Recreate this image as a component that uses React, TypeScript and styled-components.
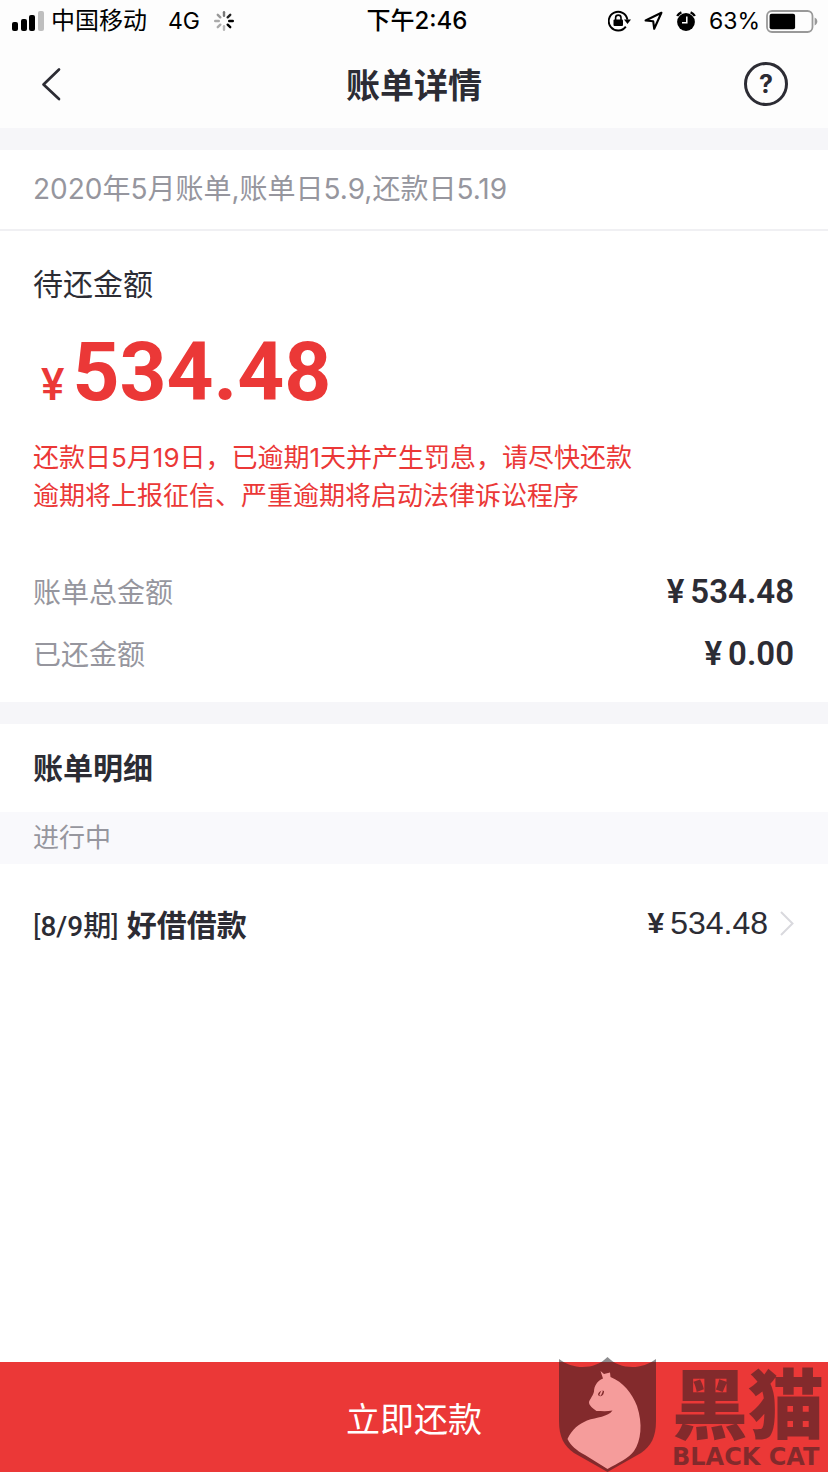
import React from "react";
import styled, { createGlobalStyle } from "styled-components";

const ink = "#2c2c34";
const muted = "#96969e";
const red = "#eb3837";

const GlobalStyle = createGlobalStyle`
  * { box-sizing: border-box; }
  body {
    margin: 0;
    background: #fff;
    color: ${ink};
    font-family: Inter, "Noto Sans CJK SC", sans-serif;
  }
  h1, h2, p, dl, dd, ul { margin: 0; padding: 0; font-weight: 400; }
  button, a { font: inherit; color: inherit; text-decoration: none; }
`;

const Page = styled.div`
  display: flex;
  flex-direction: column;
  min-height: 100vh;
`;

const StatusBar = styled.div`
  display: grid;
  grid-template-columns: 1fr auto 1fr;
  align-items: center;
  height: 40px;
  padding: 0 10px 0 12px;
  background: #fdfdfd;
  color: #000;
  font-size: 24px;
  line-height: 42px;
  white-space: nowrap;
`;

const StatusGroup = styled.div<{ $end?: boolean; $gap: number }>`
  display: flex;
  align-items: center;
  justify-content: ${(p) => (p.$end ? "flex-end" : "flex-start")};
  gap: ${(p) => p.$gap}px;
`;

const Network = styled.span`
  margin: 0 7px 0 14px;
  font-size: 23px;
`;

const Clock = styled.time`
  padding-left: 4px;
  font-size: 24px;
  font-weight: 500;
`;

const Percent = styled.span`
  font-size: 23px;
`;

const NavBar = styled.header`
  display: grid;
  grid-template-columns: 1fr auto 1fr;
  align-items: center;
  height: 88px;
  padding: 0 40px;
  background: #fdfdfd;
`;

const Title = styled.h1`
  padding-top: 4px;
  font-size: 34px;
  line-height: 48px;
  font-weight: 600;
`;

const IconButton = styled.button<{ $end?: boolean }>`
  display: flex;
  padding: 0;
  border: 0;
  background: none;
  justify-self: ${(p) => (p.$end ? "end" : "start")};
  cursor: pointer;
`;

const Band = styled.div`
  height: 22px;
  background: #f6f6f9;
`;

const Period = styled.p`
  padding: 18px 33px;
  border-bottom: 2px solid #f0f0f3;
  color: ${muted};
  font-size: 28px;
  line-height: 43px;
`;

const Summary = styled.section`
  padding: 30px 34px 18px 33px;
`;

const SummaryLabel = styled.h2`
  font-size: 30px;
  line-height: 46px;
`;

const Due = styled.p`
  display: flex;
  align-items: baseline;
  gap: 8px;
  padding: 15px 0 4px 8px;
  color: ${red};
  font-family: Roboto, sans-serif;
  font-size: 82px;
  line-height: 100px;
  font-weight: 700;
`;

const DueSign = styled.span`
  font-size: 44px;
  font-weight: 500;
`;

const Warning = styled.p`
  color: ${red};
  font-size: 26px;
  line-height: 38px;
`;

const Totals = styled.dl`
  margin-top: 45px;
`;

const TotalRow = styled.div`
  display: flex;
  justify-content: space-between;
  align-items: center;
  height: 62px;

  dt {
    color: ${muted};
    font-size: 28px;
  }
`;

const Money = styled.dd`
  display: flex;
  gap: 6px;
  font-family: Roboto, sans-serif;
  font-size: 33px;
  font-weight: 600;
`;

const DetailTitle = styled.h2`
  padding: 20px 33px;
  font-size: 30px;
  line-height: 48px;
  font-weight: 600;
`;

const GroupLabel = styled.p`
  padding: 0 33px;
  background: #f9f9fc;
  color: ${muted};
  font-size: 26px;
  line-height: 52px;
`;

const BillList = styled.ul`
  flex: 1;
  list-style: none;
`;

const BillLink = styled.a`
  display: flex;
  align-items: center;
  justify-content: space-between;
  height: 118px;
  padding: 0 34px 0 33px;
`;

const BillName = styled.span`
  display: flex;
  align-items: baseline;
  gap: 8px;
  font-family: Roboto, "Noto Sans CJK SC", sans-serif;
  font-size: 30px;
  font-weight: 600;
`;

const Installment = styled.span`
  font-size: 28px;
  font-weight: 500;

  i {
    font-style: normal;
    font-weight: 400;
  }
`;

const BillAmount = styled.span`
  display: flex;
  align-items: center;
  gap: 6px;
  font-family: "Liberation Sans", sans-serif;
  font-size: 32px;

  b {
    font-size: 30px;
    font-weight: 700;
  }

  svg {
    margin-left: 6px;
  }
`;

const Footer = styled.footer`
  position: relative;
  display: flex;
`;

const PayButton = styled.button`
  flex: 1;
  height: 110px;
  border: 0;
  background: ${red};
  color: #fff;
  font-size: 34px;
  cursor: pointer;
`;

const Watermark = styled.div`
  position: absolute;
  right: 0;
  bottom: 0;
  display: flex;
  align-items: flex-end;
  gap: 16px;
  color: #1e1e22;
  opacity: 0.5;
  pointer-events: none;
`;

const Brand = styled.div`
  display: flex;
  flex-direction: column;
  width: 156px;
  font-weight: 900;
  white-space: nowrap;
`;

const BrandName = styled.span`
  font-family: "Noto Sans CJK SC", sans-serif;
  font-size: 76px;
  line-height: 84px;
`;

const BrandLatin = styled.span`
  font-family: "DejaVu Sans", sans-serif;
  font-size: 24px;
  line-height: 30px;
`;

const Signal = () => (
  <svg width="32" height="20" viewBox="0 0 32 20" aria-hidden="true">
    <rect x="0" y="11" width="6" height="9" rx="2" />
    <rect x="9" y="8" width="6" height="12" rx="2" />
    <rect x="17" y="4" width="6" height="16" rx="2" />
    <rect x="26" y="0" width="6" height="20" rx="2" fill="#bfbfbf" />
  </svg>
);

const spokes = ["#777", "#222", "#000", "#000", "#b8b8b8", "#aaa", "#aaa", "#999"];

const Spinner = () => (
  <svg width="20" height="20" viewBox="-10 -10 20 20" aria-hidden="true">
    {spokes.map((stroke, i) => (
      <path
        key={i}
        d="M0-5.2V-8.8"
        stroke={stroke}
        strokeWidth="2.4"
        strokeLinecap="round"
        transform={`rotate(${i * 45})`}
      />
    ))}
  </svg>
);

const RotationLock = () => (
  <svg width="23" height="22" viewBox="0 0 23 22" fill="none" aria-hidden="true">
    <path d="M17.8 16.6A9.4 9.4 0 1 1 19.4 9.6" stroke="#000" strokeWidth="1.9" />
    <path d="M16 9.5h7l-3.5 4.5z" fill="#000" />
    <rect x="5.5" y="9.4" width="9.5" height="6.6" rx="1" fill="#000" />
    <path d="M7.6 10V7.8a2.7 2.7 0 0 1 5.4 0V10" stroke="#000" strokeWidth="1.6" />
  </svg>
);

const Location = () => (
  <svg width="19" height="20" viewBox="0 0 19 20" fill="none" aria-hidden="true">
    <path
      d="M17.4 1.8 1.6 9.5l7.6.7 1 7.6z"
      stroke="#000"
      strokeWidth="2.1"
      strokeLinejoin="round"
    />
  </svg>
);

const Alarm = () => (
  <svg width="20" height="20" viewBox="0 0 20 20" fill="none" aria-hidden="true">
    <circle cx="10" cy="11" r="8.9" fill="#000" />
    <path d="M1.2 5A8 8 0 0 1 5.4 1.4M14.6 1.4A8 8 0 0 1 18.8 5" stroke="#000" strokeWidth="2.4" />
    <path d="M10.8 5.6v6.2H6" stroke="#fff" strokeWidth="1.5" />
  </svg>
);

const Battery = () => (
  <svg width="52" height="23" viewBox="0 0 52 23" fill="none" aria-hidden="true">
    <rect x="1" y="1" width="45.5" height="21" rx="5" stroke="#999" strokeWidth="1.8" />
    <rect x="3.6" y="3.8" width="25.5" height="15.4" rx="2" fill="#000" />
    <path d="M48.6 7.6c3.6 1.4 3.6 6.4 0 7.8z" fill="#999" />
  </svg>
);

const BackIcon = () => (
  <svg width="22" height="34" viewBox="0 0 22 34" fill="none" aria-hidden="true">
    <path
      d="M19 2.5 3.5 17.5 19 32"
      stroke={ink}
      strokeWidth="2.7"
      strokeLinecap="round"
      strokeLinejoin="round"
    />
  </svg>
);

const HelpMark = styled.span`
  display: flex;
  align-items: center;
  justify-content: center;
  width: 44px;
  height: 44px;
  border: 3px solid ${ink};
  border-radius: 50%;
  font-size: 25px;
  font-weight: 700;
`;

const Chevron = () => (
  <svg width="14" height="25" viewBox="0 0 14 25" fill="none" aria-hidden="true">
    <path d="M1 1 12.5 12.5 1 24" stroke="#d9d9de" strokeWidth="2" />
  </svg>
);

const CatShield = () => (
  <svg width="97" height="115" viewBox="0 0 97 115" aria-hidden="true">
    <path
      d="M0 2C14 13 36 13 48.5 0 61 13 83 13 97 2V64C97 80 92 89 82 96L48.5 115 15 96C5 89 0 80 0 64z"
      fill="#1e1e22"
    />
    <path
      d="M41.5 14 45 17 51 15.500 51.5 20C64 25 73 36 78 49 84 67 82 84 75 94 70 101 59 106 48.5 112L26 98C17 93 12 89 8.5 82 13 72 20 67 28 63.5 38 60 49 60 53.5 53.5 48 54.5 43 54 37.5 54 34 51 30 49 30 45 32 40 34 39 35 34.5 35 29 38 24 44 21.5z"
      fill="#fff"
    />
    <path d="M39 38c0-3 3-5 6-4 0 4-3 7-6 4z" fill="#1e1e22" />
    <path d="m41 38.5 2-4.5" stroke="#fff" strokeWidth="1.8" />
  </svg>
);

const totals = [
  { label: "账单总金额", value: "534.48" },
  { label: "已还金额", value: "0.00" },
];

export default function App() {
  return (
    <Page lang="zh-CN">
      <GlobalStyle />
      <StatusBar>
        <StatusGroup $gap={7}>
          <Signal />
          <span>中国移动</span>
          <Network>4G</Network>
          <Spinner />
        </StatusGroup>
        <Clock>下午2:46</Clock>
        <StatusGroup $end $gap={13}>
          <RotationLock />
          <Location />
          <Alarm />
          <StatusGroup $gap={6}>
            <Percent>63%</Percent>
            <Battery />
          </StatusGroup>
        </StatusGroup>
      </StatusBar>
      <NavBar>
        <IconButton aria-label="返回">
          <BackIcon />
        </IconButton>
        <Title>账单详情</Title>
        <IconButton $end aria-label="帮助">
          <HelpMark>?</HelpMark>
        </IconButton>
      </NavBar>
      <Band />
      <Period>2020年5月账单,账单日5.9,还款日5.19</Period>
      <Summary>
        <SummaryLabel>待还金额</SummaryLabel>
        <Due>
          <DueSign>¥</DueSign>534.48
        </Due>
        <Warning>
          还款日5月19日，已逾期1天并产生罚息，请尽快还款
          <br />
          逾期将上报征信、严重逾期将启动法律诉讼程序
        </Warning>
        <Totals>
          {totals.map((row) => (
            <TotalRow key={row.label}>
              <dt>{row.label}</dt>
              <Money>
                <span>¥</span>
                {row.value}
              </Money>
            </TotalRow>
          ))}
        </Totals>
      </Summary>
      <Band />
      <DetailTitle>账单明细</DetailTitle>
      <GroupLabel>进行中</GroupLabel>
      <BillList>
        <li>
          <BillLink href="#bill">
            <BillName>
              <Installment>
                <i>[</i>8/9期<i>]</i>
              </Installment>
              好借借款
            </BillName>
            <BillAmount>
              <b>¥</b>534.48
              <Chevron />
            </BillAmount>
          </BillLink>
        </li>
      </BillList>
      <Footer>
        <PayButton>立即还款</PayButton>
        <Watermark>
          <CatShield />
          <Brand>
            <BrandName>黑猫</BrandName>
            <BrandLatin>BLACK CAT</BrandLatin>
          </Brand>
        </Watermark>
      </Footer>
    </Page>
  );
}
